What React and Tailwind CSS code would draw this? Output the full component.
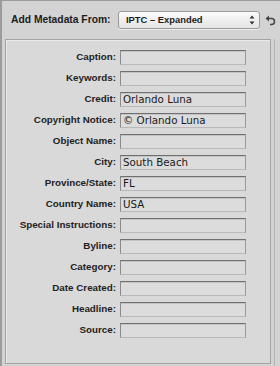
const fields = [
  ['Caption', ''],
  ['Keywords', ''],
  ['Credit', 'Orlando Luna'],
  ['Copyright Notice', '© Orlando Luna'],
  ['Object Name', ''],
  ['City', 'South Beach'],
  ['Province/State', 'FL'],
  ['Country Name', 'USA'],
  ['Special Instructions', ''],
  ['Byline', ''],
  ['Category', ''],
  ['Date Created', ''],
  ['Headline', ''],
  ['Source', ''],
];

const sans = { fontFamily: "'Liberation Sans', Arial, sans-serif" };
const wide = { fontFamily: "'DejaVu Sans', 'Liberation Sans', sans-serif" };

function Field({ label, value }) {
  return (
    <div className="flex items-center h-[21px]">
      <div className="w-[110px] text-right text-[9.8px] font-bold text-[#222] whitespace-nowrap" style={sans}>
        {label}:
      </div>
      <div
        className="ml-[4px] w-[126px] h-[15px] bg-[#dcdcdc] border border-t-[#6f6f6f] border-l-[#8a8a8a] border-r-[#9a9a9a] border-b-[#b9b9b9] shadow-[inset_0_1px_0_#c4c4c4] flex items-center px-[2px] text-[10.3px] text-[#1a1a1a] leading-none whitespace-nowrap"
        style={wide}
      >
        {value}
      </div>
    </div>
  );
}

export default function App() {
  return (
    <div className="w-[280px] h-[366px] bg-[#d3d3d3] border-l-2 border-t border-[#9c9c9c] flex flex-col overflow-hidden" style={sans}>
      {/* header */}
      <div className="h-[38px] flex items-center pl-[9px]">
        <span className="w-[99px] text-[10.3px] font-bold text-[#1c1c1c] whitespace-nowrap">Add Metadata From:</span>
        <div className="ml-[8px] w-[142px] h-[18px] rounded-[3px] bg-gradient-to-b from-[#fbfbfb] to-[#e4e4e4] border border-[#9a9a9a] shadow-[0_1px_0_#eeeeee] flex items-center pl-[7px] pr-[4px]">
          <span className="flex-1 text-[9.4px] font-bold text-[#1c1c1c]">IPTC – Expanded</span>
          <svg width="6" height="10" viewBox="0 0 6 10">
            <path d="M3 0.5 L5.5 3.5 L0.5 3.5 Z" fill="#333" />
            <path d="M3 9.5 L5.5 6.5 L0.5 6.5 Z" fill="#333" />
          </svg>
        </div>
        <svg className="ml-[5px]" width="11" height="11" viewBox="0 0 11 11">
          <path d="M3 3.5 H6.5 A3 3 0 0 1 6.5 9.5 H5" fill="none" stroke="#444" strokeWidth="1.5" />
          <path d="M0.5 3.5 L4 0.5 L4 6.5 Z" fill="#444" />
        </svg>
      </div>
      {/* panel */}
      <div className="flex flex-1 mr-[5px]">
        <div className="ml-[3px] w-[266px] h-[325px] bg-[#d9d9d9] border border-[#a4a4a4] shadow-[inset_1px_1px_0_#eaeaea] pt-[7px]">
          {fields.map(([l, v]) => (
            <Field key={l} label={l} value={v} />
          ))}
        </div>
        <div className="ml-auto w-[1px] h-full bg-[#b5b5b5]" />
      </div>
    </div>
  );
}
